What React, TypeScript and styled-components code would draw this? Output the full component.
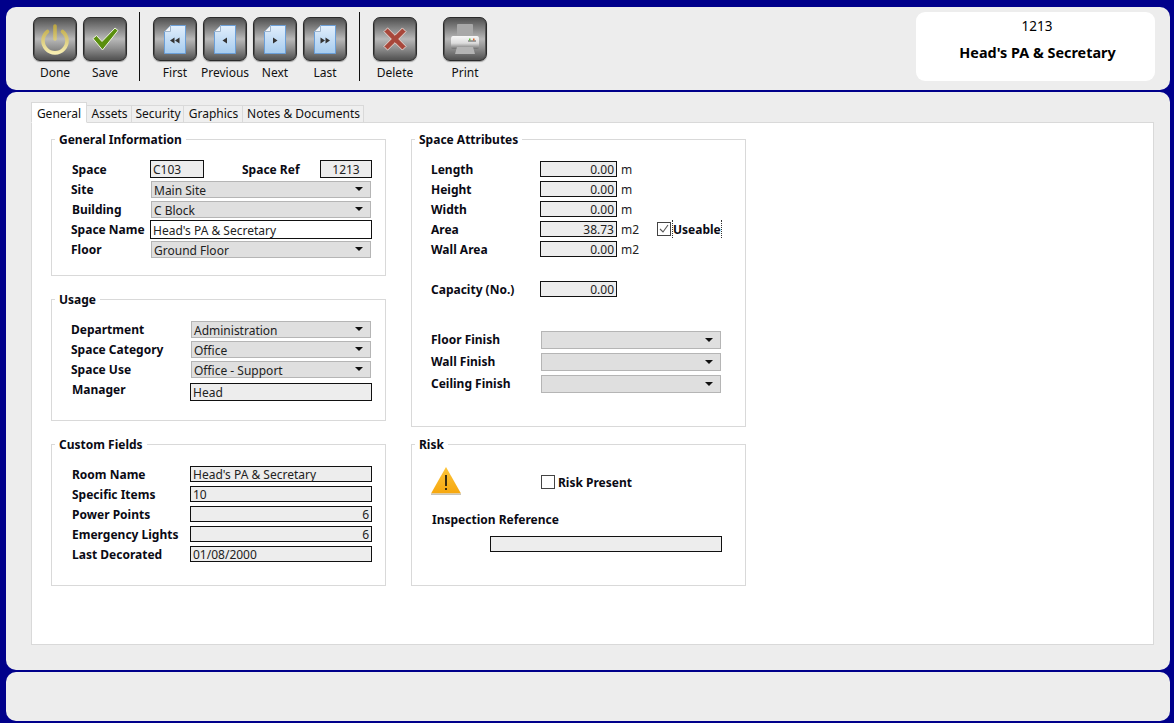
import React from "react";
import styled, { createGlobalStyle } from "styled-components";

const Global = createGlobalStyle`
  html, body { margin: 0; padding: 0; background: #fff; }
  body { font-family: "Noto Sans", "DejaVu Sans", sans-serif; font-size: 12px; color: #000; }
`;

const Page = styled.div`
  width: 1174px; height: 723px; box-sizing: border-box;
  background: #00008b;
  padding: 7px 4px 2px 6px;
  display: flex; flex-direction: column; gap: 2px;
`;
const Panel = styled.div`
  background: #ededed; border-radius: 10px; flex: none;
`;
const Toolbar = styled(Panel)`
  height: 83px; box-sizing: border-box; padding: 5px 15px 0 24px;
  display: flex; align-items: flex-start;
`;
const Tool = styled.div<{ $w?: number; $ml?: number }>`
  width: ${p => p.$w ?? 50}px; margin-left: ${p => p.$ml ?? 0}px; flex: none;
  display: flex; flex-direction: column; align-items: center; padding-top: 5px;
`;
const Glass = styled.div`
  width: 44px; height: 44px; box-sizing: border-box; border-radius: 7px;
  border: 1px solid #2b2b2b;
  box-shadow: 0 1px 1px #999, inset 0 0 0 1px #555;
  background: linear-gradient(#505050 0%, #8a8a8a 28%, #b8b8b8 50%, #8f8f8f 72%, #505050 100%);
  display: flex; align-items: center; justify-content: center;
`;
const ToolLabel = styled.div`
  margin-top: 4px; font-size: 12px; line-height: 16px; white-space: nowrap; color: #111;
`;
const Sep = styled.div`
  width: 1px; height: 69px; background: #111; margin: 0 10px 0 9px; flex: none;
`;
const TitleCard = styled.div`
  margin-left: auto; width: 239px; height: 69px; background: #fff; border-radius: 9px;
  display: flex; flex-direction: column; align-items: center; flex: none;
`;
const TitleRef = styled.div`
  margin-top: 6px; padding-left: 3px; font-size: 13.5px; line-height: 17px;
`;
const TitleName = styled.div`
  margin-top: 9px; padding-left: 4px; font-size: 14.4px; line-height: 17px; font-weight: 700;
`;
const Main = styled(Panel)`
  height: 578px; box-sizing: border-box; padding: 10px 16px 25px 25px;
  display: flex; flex-direction: column;
`;
const Tabs = styled.div`
  display: flex; align-items: flex-end; height: 21px; flex: none; position: relative; z-index: 1; margin-bottom: -1px;
`;
const Tab = styled.div<{ $active?: boolean; $w: number }>`
  width: ${p => p.$w}px; box-sizing: border-box; text-align: center; white-space: nowrap;
  height: ${p => (p.$active ? 21 : 18)}px; line-height: ${p => (p.$active ? 22 : 16)}px;
  font-size: 12px; color: #111; padding-left: ${p => (p.$active ? 0 : 1)}px;
  border: 1px solid #d9d9d9; border-left-width: ${p => (p.$active ? 1 : 0)}px;
  border-bottom: ${p => (p.$active ? "1px solid #fff" : "1px solid #d9d9d9")};
  background: ${p => (p.$active ? "#fff" : "#efefef")};
`;
const Content = styled.div`
  flex: 1; background: #fff; border: 1px solid #d9d9d9; box-sizing: border-box;
  padding: 8px 19px; display: flex; gap: 25px; align-items: flex-start;
`;
const Column = styled.div<{ $gap: number }>`
  width: 335px; display: flex; flex-direction: column; gap: ${p => p.$gap}px; flex: none;
`;
const Group = styled.fieldset<{ $h: number }>`
  margin: 0; box-sizing: border-box; width: 335px; height: ${p => p.$h}px;
  border: 1px solid #d9d9d9; padding: 0 0 0 19px; min-width: 0;
`;
const Legend = styled.legend`
  margin-left: -16px; padding: 0 4px; font-weight: 700; font-size: 12px; line-height: 16px; color: #0a0a14;
`;
const LegendText = styled.span`
  position: relative; top: 1px;
`;
const Stack = styled.div<{ $top: number; $left?: number }>`
  margin-top: ${p => p.$top}px; margin-left: ${p => p.$left ?? 0}px; display: flex; flex-direction: column;
`;
const Row = styled.div<{ $h?: number; $ml?: number }>`
  display: flex; align-items: center; height: ${p => p.$h ?? 20}px; flex: none; margin-left: ${p => p.$ml ?? 0}px;
`;
const Label = styled.div<{ $w: number; $x?: number; $up?: number }>`
  width: ${p => p.$w}px; flex: none; font-weight: 700; font-size: 12px; white-space: nowrap; color: #0a0a14;
  margin-left: ${p => p.$x ?? 0}px; position: relative; top: ${p => -(p.$up ?? 0)}px;
`;
const Field = styled.div<{ $w: number; $white?: boolean; $align?: string; $h?: number; $ml?: number }>`
  width: ${p => p.$w}px; height: ${p => p.$h ?? 16}px; box-sizing: border-box; flex: none;
  border: 1px solid #111; background: ${p => (p.$white ? "#fff" : "#ededed")};
  margin-left: ${p => p.$ml ?? 0}px;
  padding: 0 2px; line-height: ${p => p.$h ?? 16}px; font-size: 12px; color: #222; white-space: nowrap;
  text-align: ${p => p.$align ?? "left"};
`;
const SelectBox = styled.div<{ $w: number; $h?: number; $ml?: number }>`
  width: ${p => p.$w}px; height: ${p => p.$h ?? 17}px; box-sizing: border-box; flex: none;
  border: 1px solid #b5b5b5; background: #dfdfdf; margin-left: ${p => p.$ml ?? 0}px;
  display: flex; align-items: center; justify-content: space-between; padding: 0 7px 0 2px;
  font-size: 12px; color: #222; white-space: nowrap;
`;
const SelectText = styled.span`
  padding-top: 2px;
`;
const Caret = styled.span`
  width: 0; height: 0; border-left: 4px solid transparent; border-right: 4px solid transparent; border-top: 4px solid #111;
`;
const Unit = styled.div`
  margin-left: 4px; width: 36px; flex: none; font-size: 12px; color: #222;
`;
const CheckBox = styled.div`
  width: 12px; height: 12px; border: 1px solid #444; background: #fff; flex: none; display: flex; align-items: center; justify-content: center;
`;
const CheckLabel = styled.div<{ $focus?: boolean }>`
  margin-left: ${p => (p.$focus ? 1 : 3)}px; font-weight: 700; font-size: 12px; color: #0a0a14; white-space: nowrap;
  ${p => (p.$focus ? "border-left: 1px dotted #333; border-right: 1px dotted #333; padding-top: 1px;" : "")}
`;
const Footer = styled(Panel)`
  height: 49px;
`;
const RiskHead = styled.div`
  display: flex; align-items: flex-start; margin: 15px 0 0 0; height: 30px;
`;

const Sel = ({ w, h, ml, children }: { w: number; h?: number; ml?: number; children?: React.ReactNode }) => (
  <SelectBox $w={w} $h={h} $ml={ml}><SelectText>{children}</SelectText><Caret /></SelectBox>
);

const Power = () => (
  <svg width="34" height="36" viewBox="0 0 34 36">
    <defs><linearGradient id="pw" gradientUnits="userSpaceOnUse" x1="0" y1="3" x2="0" y2="33"><stop offset="0" stopColor="#b9a23c" /><stop offset="1" stopColor="#f9f0b4" /></linearGradient></defs>
    <path d="M9.5 10.5a12 12 0 1 0 15 0" fill="none" stroke="url(#pw)" strokeWidth="3.6" strokeLinecap="round" />
    <path d="M17 5v13" fill="none" stroke="url(#pw)" strokeWidth="3.6" strokeLinecap="round" />
  </svg>
);
const Check = () => (
  <svg width="27" height="24" viewBox="0 0 27 24">
    <path d="M1 11.5l3.5-3 5.5 6L23 1l3 2.5L10.5 23z" fill="#5a8f0e" stroke="#eef3e2" strokeWidth="1" strokeLinejoin="round" />
  </svg>
);
const Doc = ({ kind }: { kind: "first" | "prev" | "next" | "last" }) => (
  <svg width="22" height="29" viewBox="0 0 22 29">
    <defs><linearGradient id={"d" + kind} x1="0" y1="0" x2="0" y2="1"><stop offset="0" stopColor="#e2effc" /><stop offset="1" stopColor="#a6cbee" /></linearGradient></defs>
    <path d="M6.5.5h15v28H.5V6.5z" fill={`url(#d${kind})`} stroke="#6b9fd8" />
    <path d="M.5 6.5h6v-6z" fill="#f5f5f5" stroke="#9db4cc" />
    <g fill="#333">
      {kind === "first" && <path d="M10.5 12.5v6l-4.5-3zM15.5 12.5v6l-4.5-3z" />}
      {kind === "prev" && <path d="M13 12.5v6l-4.5-3z" />}
      {kind === "next" && <path d="M9 12.5v6l4.5-3z" />}
      {kind === "last" && <path d="M6.5 12.5v6l4.5-3zM11.5 12.5v6l4.5-3z" />}
    </g>
  </svg>
);
const Cross = () => (
  <svg width="24" height="24" viewBox="0 0 26 26">
    <path d="M5 1l8 8 8-8 4 4-8 8 8 8-4 4-8-8-8 8-4-4 8-8-8-8z" fill="#a8473a" stroke="#ecdcd8" strokeWidth="1" strokeLinejoin="round" />
  </svg>
);
const Printer = () => (
  <svg width="30" height="31" viewBox="0 0 30 31">
    <defs>
      <linearGradient id="pb" x1="0" y1="0" x2="0" y2="1"><stop offset="0" stopColor="#f7f7f7" /><stop offset="0.55" stopColor="#dcdcdc" /><stop offset="1" stopColor="#6f6f6f" /></linearGradient>
    </defs>
    <rect x="7" y="0" width="16" height="13" rx="1" fill="#a8a8a8" />
    <path d="M3 12h24q2 0 2 3v8q0 2-2 2H3q-2 0-2-2v-8q0-3 2-3z" fill="url(#pb)" />
    <rect x="18" y="16.5" width="8" height="1" fill="#555" />
    <rect x="19" y="14.5" width="1.5" height="2" fill="#5fbf3f" />
    <rect x="23" y="14.5" width="1.5" height="2" fill="#d9662e" />
    <path d="M7 23h16l2 7H5z" fill="#b4b4b4" />
  </svg>
);
const Warn = () => (
  <svg width="30" height="28" viewBox="0 0 30 28">
    <defs><linearGradient id="wg" x1="0" y1="0" x2="0" y2="1"><stop offset="0" stopColor="#fdc53a" /><stop offset="1" stopColor="#f6a70e" /></linearGradient></defs>
    <path d="M15 0L30 26.5H0z" fill="url(#wg)" />
    <rect x="0" y="26.5" width="30" height="1.5" fill="#c9c4b8" />
    <rect x="14" y="8" width="2" height="11" fill="#3a2d10" />
    <rect x="14" y="21" width="2" height="2" fill="#3a2d10" />
  </svg>
);
const Tick = () => (
  <svg width="10" height="10" viewBox="0 0 10 10"><path d="M1 5l3 3 5-7" fill="none" stroke="#555" strokeWidth="1.1" /></svg>
);

export default function App() {
  return (
    <Page>
      <Global />
      <Toolbar>
        <Tool><Glass><Power /></Glass><ToolLabel>Done</ToolLabel></Tool>
        <Tool><Glass><Check /></Glass><ToolLabel>Save</ToolLabel></Tool>
        <Sep />
        <Tool><Glass><Doc kind="first" /></Glass><ToolLabel>First</ToolLabel></Tool>
        <Tool><Glass><Doc kind="prev" /></Glass><ToolLabel>Previous</ToolLabel></Tool>
        <Tool><Glass><Doc kind="next" /></Glass><ToolLabel>Next</ToolLabel></Tool>
        <Tool><Glass><Doc kind="last" /></Glass><ToolLabel>Last</ToolLabel></Tool>
        <Sep />
        <Tool><Glass><Cross /></Glass><ToolLabel>Delete</ToolLabel></Tool>
        <Tool $ml={20}><Glass><Printer /></Glass><ToolLabel>Print</ToolLabel></Tool>
        <TitleCard>
          <TitleRef>1213</TitleRef>
          <TitleName>Head's PA &amp; Secretary</TitleName>
        </TitleCard>
      </Toolbar>
      <Main>
        <Tabs>
          <Tab $active $w={56}>General</Tab>
          <Tab $w={45}>Assets</Tab>
          <Tab $w={52}>Security</Tab>
          <Tab $w={59}>Graphics</Tab>
          <Tab $w={121}>Notes &amp; Documents</Tab>
        </Tabs>
        <Content>
          <Column $gap={15}>
            <Group $h={145}>
              <Legend><LegendText>General Information</LegendText></Legend>
              <Stack $top={12}>
                <Row><Label $w={78} $x={1}>Space</Label><Field $w={54} $h={18}>C103</Field><Label $w={78} $x={38}>Space Ref</Label><Field $w={52} $h={18} $align="center">1213</Field></Row>
                <Row><Label $w={80}>Site</Label><Sel w={220}>Main Site</Sel></Row>
                <Row><Label $w={80} $x={1}>Building</Label><Sel w={220} ml={-1}>C Block</Sel></Row>
                <Row><Label $w={79}>Space Name</Label><Field $w={222} $h={19} $white>Head's PA &amp; Secretary</Field></Row>
                <Row><Label $w={80}>Floor</Label><Sel w={220}>Ground Floor</Sel></Row>
              </Stack>
            </Group>
            <Group $h={130}>
              <Legend><LegendText>Usage</LegendText></Legend>
              <Stack $top={12}>
                <Row><Label $w={120}>Department</Label><Sel w={180}>Administration</Sel></Row>
                <Row><Label $w={120}>Space Category</Label><Sel w={180}>Office</Sel></Row>
                <Row><Label $w={120}>Space Use</Label><Sel w={180}>Office - Support</Sel></Row>
                <Row $h={26}><Label $w={118} $x={1} $up={3}>Manager</Label><Field $w={182} $h={18}>Head</Field></Row>
              </Stack>
            </Group>
            <Group $h={150}>
              <Legend><LegendText>Custom Fields</LegendText></Legend>
              <Stack $top={12}>
                <Row><Label $w={118} $x={1}>Room Name</Label><Field $w={182}>Head's PA &amp; Secretary</Field></Row>
                <Row><Label $w={118} $x={1}>Specific Items</Label><Field $w={182}>10</Field></Row>
                <Row><Label $w={118} $x={1}>Power Points</Label><Field $w={182} $align="right">6</Field></Row>
                <Row><Label $w={118} $x={1}>Emergency Lights</Label><Field $w={182} $align="right">6</Field></Row>
                <Row><Label $w={118} $x={1}>Last Decorated</Label><Field $w={182}>01/08/2000</Field></Row>
              </Stack>
            </Group>
          </Column>
          <Column $gap={9}>
            <Group $h={296}>
              <Legend><LegendText>Space Attributes</LegendText></Legend>
              <Stack $top={12}>
                <Row><Label $w={109}>Length</Label><Field $w={77} $align="right">0.00</Field><Unit>m</Unit></Row>
                <Row><Label $w={109}>Height</Label><Field $w={77} $align="right">0.00</Field><Unit>m</Unit></Row>
                <Row><Label $w={109}>Width</Label><Field $w={77} $align="right">0.00</Field><Unit>m</Unit></Row>
                <Row><Label $w={109}>Area</Label><Field $w={77} $align="right">38.73</Field><Unit>m2</Unit><CheckBox><Tick /></CheckBox><CheckLabel $focus>Useable</CheckLabel></Row>
                <Row><Label $w={109}>Wall Area</Label><Field $w={77} $align="right">0.00</Field><Unit>m2</Unit></Row>
                <Row $h={60}><Label $w={109}>Capacity (No.)</Label><Field $w={77} $align="right">0.00</Field></Row>
                <Row $h={10} />
                <Row $h={22}><Label $w={110} $up={1}>Floor Finish</Label><Sel w={180} h={18} /></Row>
                <Row $h={22}><Label $w={110} $up={1}>Wall Finish</Label><Sel w={180} h={18} /></Row>
                <Row $h={22}><Label $w={110} $up={1}>Ceiling Finish</Label><Sel w={180} h={18} /></Row>
              </Stack>
            </Group>
            <Group $h={150}>
              <Legend><LegendText>Risk</LegendText></Legend>
              <RiskHead>
                <Warn />
                <Row $h={30} $ml={80}><CheckBox /><CheckLabel>Risk Present</CheckLabel></Row>
              </RiskHead>
              <Stack $top={13}>
                <Row $h={18}><Label $w={200} $x={1}>Inspection Reference</Label></Row>
                <Row $h={32}><Field $w={232} $ml={59} /></Row>
              </Stack>
            </Group>
          </Column>
        </Content>
      </Main>
      <Footer />
    </Page>
  );
}
